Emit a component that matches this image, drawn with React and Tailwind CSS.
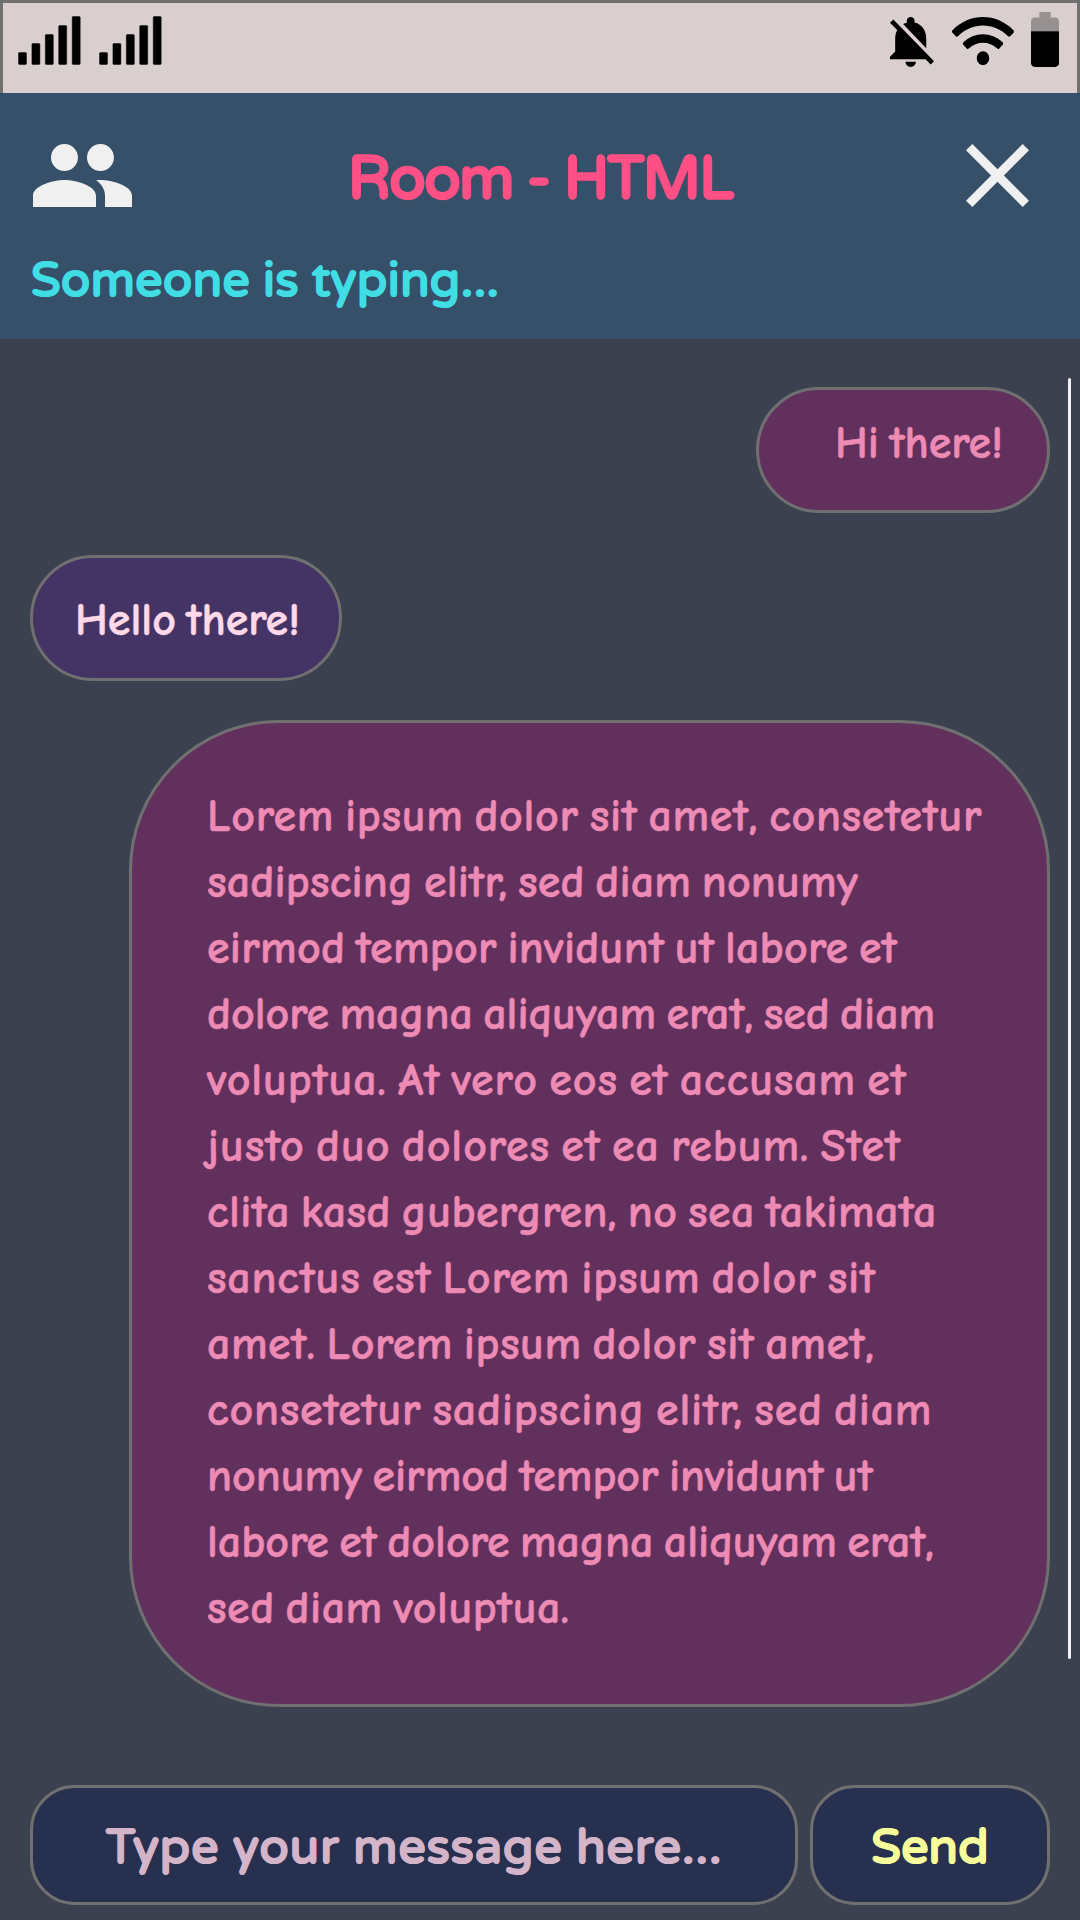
import React from "react";

const LINES = [
  ["Lorem ipsum dolor sit amet, consetetur", "tracking-[0.65px]"],
  ["sadipscing elitr, sed diam nonumy", "tracking-[0.18px]"],
  ["eirmod tempor invidunt ut labore et", "tracking-[0.25px]"],
  ["dolore magna aliquyam erat, sed diam", "tracking-[-0.02px]"],
  ["voluptua. At vero eos et accusam et", "tracking-[0.89px]"],
  ["justo duo dolores et ea rebum. Stet", "tracking-[0.92px]"],
  ["clita kasd gubergren, no sea takimata", "tracking-[0.38px]"],
  ["sanctus est Lorem ipsum dolor sit", "tracking-[0.79px]"],
  ["amet. Lorem ipsum dolor sit amet,", "tracking-[0.53px]"],
  ["consetetur sadipscing elitr, sed diam", "tracking-[0.78px]"],
  ["nonumy eirmod tempor invidunt ut", "tracking-[-0.03px]"],
  ["labore et dolore magna aliquyam erat,", "tracking-[0px]"],
  ["sed diam voluptua.", "tracking-[0.5px]"],
];

const BARS = [
  [0, 36],
  [13.4, 27],
  [26.8, 18],
  [40.2, 9],
  [53.7, 0],
];

function Signal() {
  return (
    <svg className="h-[49px] w-[63px]" viewBox="0 0 63 49">
      {BARS.map(([x, y]) => (
        <rect key={x} x={x + 0.5} y={y + 0.5} width="8" height={48 - y} rx="1" fill="#000" stroke="#000" strokeOpacity="0.45" />
      ))}
    </svg>
  );
}

function StatusBar() {
  return (
    <div className="flex h-[93px] shrink-0 items-start border-x-3 border-t-3 border-[#707070] bg-[#d9cfce] pl-[15px]">
      <div className="mt-[13px] flex gap-[18px]">
        <Signal />
        <Signal />
      </div>
      <svg className="mt-[13.5px] ml-[728px] h-[50px] w-[44px] shrink-0" viewBox="4 2.5 17 19.5" preserveAspectRatio="none">
        <path d="M20 18.69L7.84 6.14 5.27 3.49 4 4.76l2.8 2.8v.01c-.52.99-.8 2.16-.8 3.42v5l-2 2v1h13.73l2 2L21 19.72l-1-1.03zM12 22c1.11 0 2-.89 2-2h-4c0 1.11.89 2 2 2zm6-7.32V11c0-3.08-1.64-5.64-4.5-6.32V4c0-.83-.67-1.5-1.5-1.5s-1.5.67-1.5 1.5v.68c-.15.03-.29.08-.42.12-.1.03-.2.07-.3.11h-.01c-.01 0-.01 0-.02.01-.23.09-.46.2-.68.31 0 0-.01 0-.01.01L18 14.68z" />
      </svg>
      <svg className="mt-[13.5px] ml-[18px] h-[48px] w-[62px] shrink-0" viewBox="0 32 640 448" preserveAspectRatio="none">
        <path d="M634.91 154.88C457.74-8.99 182.19-8.93 5.09 154.88c-6.66 6.16-6.79 16.59-.35 22.98l34.24 33.97c6.14 6.1 16.02 6.23 22.4.38 145.92-133.68 371.3-133.71 517.25 0 6.38 5.85 16.26 5.71 22.4-.38l34.24-33.97c6.43-6.39 6.3-16.82-.36-22.98zM320 352c-35.35 0-64 28.65-64 64s28.65 64 64 64 64-28.65 64-64-28.65-64-64-64zm202.67-83.59c-115.26-101.93-290.21-101.82-405.34 0-6.9 6.1-7.12 16.69-.57 23.15l34.44 33.99c6 5.92 15.66 6.32 22.05.8 83.95-72.57 209.74-72.41 293.49 0 6.39 5.52 16.05 5.13 22.05-.8l34.44-33.99c6.56-6.46 6.33-17.06-.56-23.15z" />
      </svg>
      <svg className="mt-[9px] ml-[17px] h-[55px] w-[28px] shrink-0" viewBox="7 2 10 20" preserveAspectRatio="none">
        <path fillOpacity=".3" d="M17 5.33C17 4.6 16.4 4 15.67 4H14V2h-4v2H8.33C7.6 4 7 4.6 7 5.33V9h10V5.33z" />
        <path d="M7 9v11.67C7 21.4 7.6 22 8.33 22h7.33c.74 0 1.34-.6 1.34-1.33V9H7z" />
      </svg>
    </div>
  );
}

function Header() {
  return (
    <div className="h-[246px] shrink-0 bg-[#36506a] font-['Varela_Round','Liberation_Sans',sans-serif] font-bold">
      <div className="flex h-[157px] items-center pr-[51px] pl-[33px]">
        <svg className="mt-[8px] h-[63px] w-[99px]" viewBox="1 5 22 14" fill="#f0f0f0">
          <path d="M16 11c1.66 0 2.99-1.34 2.99-3S17.66 5 16 5c-1.66 0-3 1.34-3 3s1.34 3 3 3zm-8 0c1.66 0 2.99-1.34 2.99-3S9.66 5 8 5C6.34 5 5 6.34 5 8s1.34 3 3 3zm0 2c-2.33 0-7 1.17-7 3.5V19h14v-2.5c0-2.33-4.67-3.5-7-3.5zm8 0c-.29 0-.62.02-.97.05 1.16.84 1.97 1.97 1.97 3.45V19h6v-2.5c0-2.33-4.67-3.5-7-3.5z" />
        </svg>
        <div className="mt-[14px] ml-[216px] text-[60px] leading-[60px] tracking-[-1.5px] whitespace-nowrap text-[#ff5086] [-webkit-text-stroke:1.4px_#ff5086]">Room - HTML</div>
        <svg className="mt-[8px] ml-auto size-[63px]" viewBox="5 5 14 14" fill="#f0f0f0">
          <path d="M19 6.41L17.59 5 12 10.59 6.41 5 5 6.41 10.59 12 5 17.59 6.41 19 12 13.41 17.59 19 19 17.59 13.41 12z" />
        </svg>
      </div>
      <div className="pt-[1px] pl-[31px] text-[48px] leading-[60px] tracking-[0.5px] text-[#40dde5] [-webkit-text-stroke:0.7px_#40dde5]">Someone is typing...</div>
    </div>
  );
}

function Messages() {
  return (
    <div className="flex h-[1446px] shrink-0 justify-end pt-[39px] pr-[9px]">
      <div className="mr-[18px] flex w-[1020px] flex-col pt-[9px] font-['Comic_Neue','Lato',cursive] text-[46px] leading-[66px] font-bold whitespace-nowrap text-[#ed8bb5] [-webkit-text-stroke:0.5px_currentColor] [word-spacing:-6px]">
        <div className="h-[126px] w-[294px] self-end rounded-[63px] border-3 border-[#707070] bg-[#62305d] pt-[21px] pl-[76px]">Hi there!</div>
        <div className="mt-[42px] h-[126px] w-[312px] rounded-[63px] border-3 border-[#707070] bg-[#433465] pt-[30px] pl-[42px] text-[#ffd9e8]">Hello there!</div>
        <div className="mt-[39px] h-[987px] w-[921px] self-end rounded-[150px] border-3 border-[#707070] bg-[#62305d] pt-[61px] pl-[75px]">
          {LINES.map(([text, tracking]) => (
            <div key={text} className={tracking}>{text}</div>
          ))}
        </div>
      </div>
      <div className="h-[1281px] w-[3px] rounded-full bg-[#f0f0f5]" />
    </div>
  );
}

function Composer() {
  return (
    <div className="flex h-[120px] shrink-0 gap-[12px] px-[30px] font-['Varela_Round','Liberation_Sans',sans-serif] text-[48px] leading-[60px] font-bold whitespace-nowrap [-webkit-text-stroke:0.7px_currentColor]">
      <div className="w-[768px] rounded-[45px] border-3 border-[#707070] bg-[#27304f] pt-[30px] pl-[73px] tracking-[1.1px] text-[#d3b4c9]">Type your message here...</div>
      <div className="w-[240px] rounded-[45px] border-3 border-[#707070] bg-[#27304f] pt-[30px] text-center tracking-[0.3px] text-[#f7fd9a]">Send</div>
    </div>
  );
}

export default function App() {
  return (
    <div className="flex h-[1920px] w-[1080px] flex-col overflow-hidden bg-[#3c4150]">
      <StatusBar />
      <Header />
      <Messages />
      <Composer />
    </div>
  );
}
